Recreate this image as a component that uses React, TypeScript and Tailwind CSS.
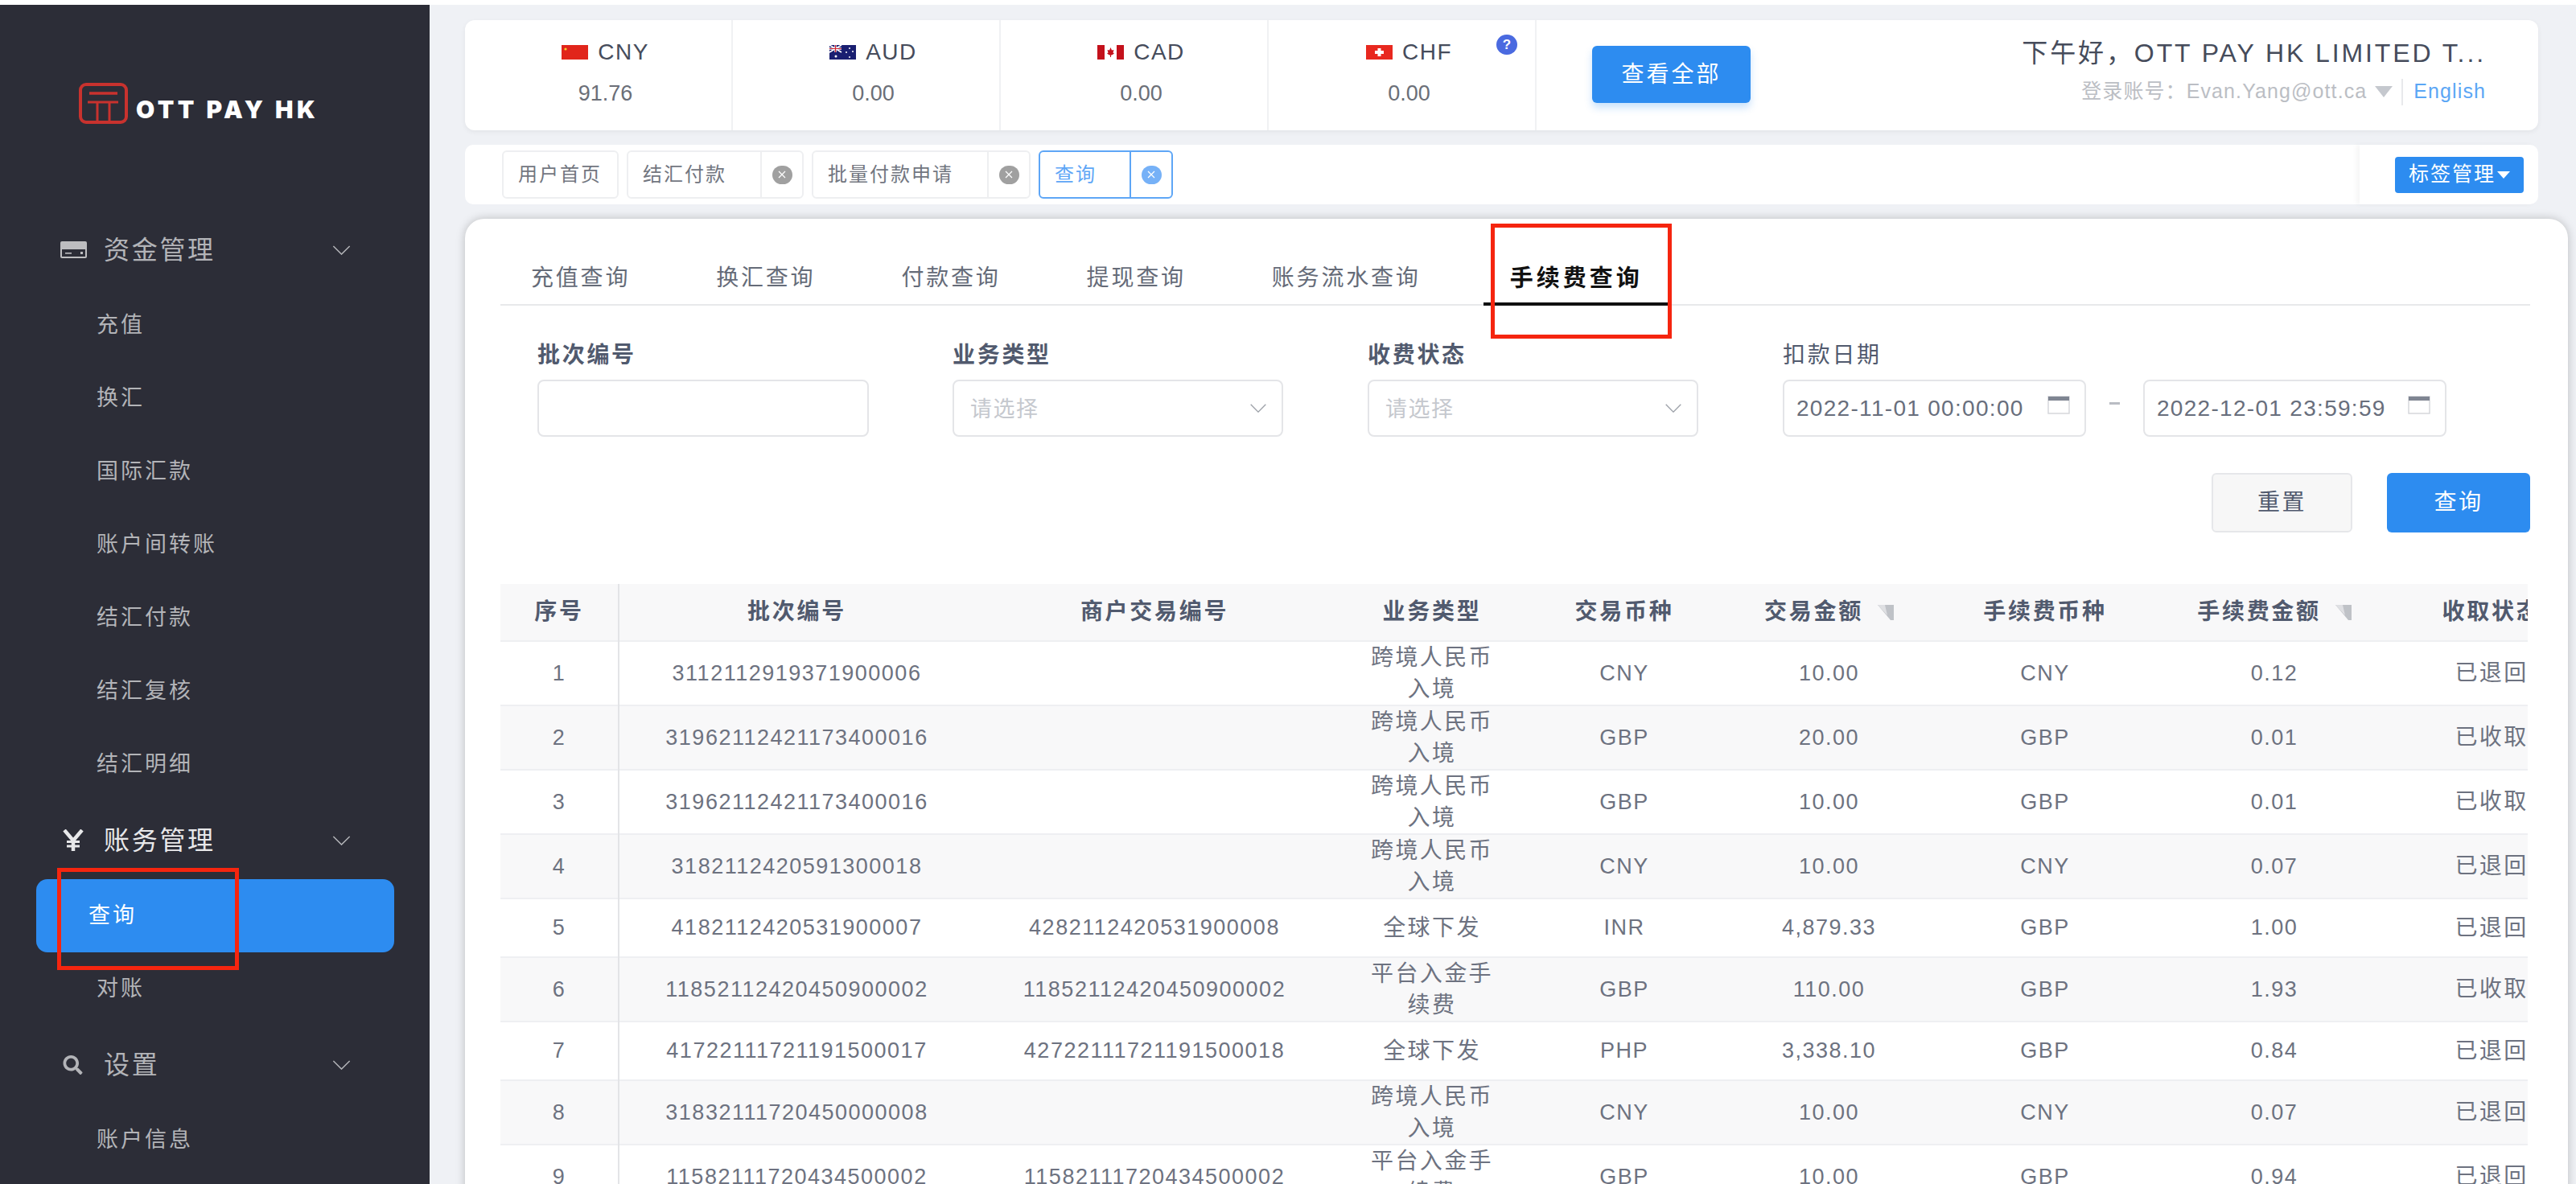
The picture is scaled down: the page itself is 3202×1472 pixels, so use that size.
import { FaSearch } from "react-icons/fa"

const rows = [
  { no: 1, batch: "3112112919371900006", order: "", type: "跨境人民币\n入境", cur: "CNY", amount: "10.00", feeCur: "CNY", fee: "0.12", status: "已退回" },
  { no: 2, batch: "31962112421173400016", order: "", type: "跨境人民币\n入境", cur: "GBP", amount: "20.00", feeCur: "GBP", fee: "0.01", status: "已收取" },
  { no: 3, batch: "31962112421173400016", order: "", type: "跨境人民币\n入境", cur: "GBP", amount: "10.00", feeCur: "GBP", fee: "0.01", status: "已收取" },
  { no: 4, batch: "3182112420591300018", order: "", type: "跨境人民币\n入境", cur: "CNY", amount: "10.00", feeCur: "CNY", fee: "0.07", status: "已退回" },
  { no: 5, batch: "4182112420531900007", order: "4282112420531900008", type: "全球下发", cur: "INR", amount: "4,879.33", feeCur: "GBP", fee: "1.00", status: "已退回" },
  { no: 6, batch: "11852112420450900002", order: "11852112420450900002", type: "平台入金手\n续费", cur: "GBP", amount: "110.00", feeCur: "GBP", fee: "1.93", status: "已收取" },
  { no: 7, batch: "41722111721191500017", order: "42722111721191500018", type: "全球下发", cur: "PHP", amount: "3,338.10", feeCur: "GBP", fee: "0.84", status: "已退回" },
  { no: 8, batch: "31832111720450000008", order: "", type: "跨境人民币\n入境", cur: "CNY", amount: "10.00", feeCur: "CNY", fee: "0.07", status: "已退回" },
  { no: 9, batch: "11582111720434500002", order: "11582111720434500002", type: "平台入金手\n续费", cur: "GBP", amount: "10.00", feeCur: "GBP", fee: "0.94", status: "已退回" },
]

function Chevron({ className }: { className: string }) {
  return (
    <svg viewBox="0 0 24 13" className={className} fill="none" stroke="currentColor" strokeWidth="1.6">
      <polyline points="1,1 12,12 23,1" />
    </svg>
  )
}

function Logo() {
  return (
    <svg viewBox="0 0 61 51" className="w-[61px] h-[51px] shrink-0" fill="none" stroke="#c8322e">
      <rect x="2" y="2" width="57" height="47" rx="7" strokeWidth="4" />
      <path d="M13 13H48" strokeWidth="3.5" />
      <path d="M11 24H49" strokeWidth="3" />
      <path d="M23 24V49M38 24V49" strokeWidth="3" />
    </svg>
  )
}

function CardIcon() {
  return (
    <svg viewBox="0 0 33 21" className="w-[33px] h-[21px]">
      <rect x="0" y="0" width="33" height="21" rx="2" fill="#bdbdc0" />
      <rect x="2" y="10" width="29" height="9" fill="#2c2d37" />
      <rect x="6" y="14" width="8" height="1.6" fill="#bdbdc0" />
      <rect x="25" y="13" width="3" height="3" fill="#bdbdc0" />
    </svg>
  )
}

function YenIcon() {
  return (
    <svg viewBox="0 0 26 27" className="w-[26px] h-[27px]" fill="none" stroke="currentColor" strokeWidth="4.5">
      <path d="M2 1L13 14L24 1" />
      <path d="M13 14V27" />
      <path d="M5 15.5H21M5 21H21" strokeWidth="3" />
    </svg>
  )
}

function ChinaFlag() {
  return (
    <svg viewBox="0 0 33 18" className="w-[33px] h-[18px]">
      <rect width="33" height="18" fill="#e1251b" />
      <circle cx="5" cy="5" r="1.6" fill="#f7d02c" />
    </svg>
  )
}

function AusFlag() {
  return (
    <svg viewBox="0 0 33 18" className="w-[33px] h-[18px]">
      <rect width="33" height="18" fill="#1a1f71" />
      <path d="M0 0L15 9M15 0L0 9" stroke="#ffffff" strokeWidth="1.6" />
      <path d="M7.5 0V9M0 4.5H15" stroke="#ffffff" strokeWidth="2.4" />
      <path d="M7.5 0V9M0 4.5H15" stroke="#d0222e" strokeWidth="1.2" />
      <circle cx="8" cy="14" r="1.5" fill="#ffffff" />
      <circle cx="25" cy="4" r="1" fill="#ffffff" />
      <circle cx="21" cy="9" r="1" fill="#ffffff" />
      <circle cx="29" cy="8" r="1" fill="#ffffff" />
      <circle cx="25" cy="15" r="1" fill="#ffffff" />
    </svg>
  )
}

function CanadaFlag() {
  return (
    <svg viewBox="0 0 33 18" className="w-[33px] h-[18px]">
      <rect width="33" height="18" fill="#ffffff" />
      <rect width="9" height="18" fill="#c4111b" />
      <rect x="24" width="9" height="18" fill="#c4111b" />
      <path d="M16.5 3L18 6.5L20.5 6L19.5 9.5L21 10.5L18 12.5L17 12.5V15H16V12.5L15 12.5L12 10.5L13.5 9.5L12.5 6L15 6.5Z" fill="#c4111b" />
    </svg>
  )
}

function SwissFlag() {
  return (
    <svg viewBox="0 0 33 18" className="w-[33px] h-[18px]">
      <rect width="33" height="18" fill="#e8281f" />
      <path d="M14.5 4H18.5V7H22V11H18.5V14H14.5V11H11V7H14.5Z" fill="#ffffff" />
    </svg>
  )
}

function Balance({ flag, code, value, last }: { flag: React.ReactNode; code: string; value: string; last?: boolean }) {
  return (
    <div className={`w-[333px] h-full pl-[18px] pt-[27px] flex flex-col items-center border-r-2 border-[#f0f1f3] ${last ? "relative" : ""}`}>
      <div className="h-[26px] flex items-center gap-[12px]">
        {flag}
        <span className="text-[28px] leading-[26px] tracking-[1.5px] text-[#464c5b]">{code}</span>
      </div>
      <span className="mt-[21px] text-[27px] leading-[34px] text-[#6b6f78]">{value}</span>
      {last && (
        <span className="absolute right-[22px] top-[18px] w-[26px] h-[25px] rounded-full bg-[#4a6ae0] flex items-center justify-center text-[17px] font-bold text-white">
          ?
        </span>
      )}
    </div>
  )
}

function CloseDot({ active }: { active?: boolean }) {
  return (
    <span className={`w-[25px] h-[23px] rounded-full flex items-center justify-center ${active ? "bg-[#76b1f7]" : "bg-[#a0a0a0]"}`}>
      <svg viewBox="0 0 10 10" className="w-[10px] h-[10px]" stroke="#ffffff" strokeWidth="1.2">
        <path d="M1 1L9 9M9 1L1 9" />
      </svg>
    </span>
  )
}

function TabChip({ label, width, closable, active }: { label: string; width: string; closable?: boolean; active?: boolean }) {
  return (
    <div className={`${width} h-[60px] flex rounded-[6px] border-2 ${active ? "border-[#5ea6f6]" : "border-[#eeeff1]"}`}>
      <div className={`flex-1 pl-[18px] flex items-center text-[24px] tracking-[2px] ${active ? "text-[#5ea6f6]" : "text-[#72767f]"}`}>
        {label}
      </div>
      {closable && (
        <div className={`w-[52px] flex items-center justify-center border-l-2 ${active ? "border-[#5ea6f6]" : "border-[#eeeff1]"}`}>
          <CloseDot active={active} />
        </div>
      )}
    </div>
  )
}

function SelectField({ label }: { label: string }) {
  return (
    <div className="w-[411px]">
      <div className="h-[40px] leading-[40px] mb-[10px] text-[28px] tracking-[2.7px] font-bold text-[#515a6e]">{label}</div>
      <div className="h-[71px] rounded-[8px] border-2 border-[#e4e5e8] pl-[20px] pr-[18px] flex items-center justify-between">
        <span className="text-[27px] tracking-[1.5px] text-[#c5c8ce] mt-[3px]">请选择</span>
        <Chevron className="w-[22px] h-[11px] text-[#9ea2a9]" />
      </div>
    </div>
  )
}

function CalendarIcon() {
  return (
    <svg viewBox="0 0 28 23" className="w-[28px] h-[23px] -mt-[8px]">
      <rect x="1" y="1" width="26" height="21" fill="none" stroke="#d3d5d9" strokeWidth="1.4" />
      <rect x="1" y="1" width="26" height="5" fill="#7f8592" />
    </svg>
  )
}

function DateField({ value }: { value: string }) {
  return (
    <div className="w-[377px] h-[71px] rounded-[8px] border-2 border-[#e4e5e8] pl-[15px] pr-[18px] flex items-center justify-between">
      <span className="text-[28px] tracking-[1.3px] text-[#686e7c] whitespace-nowrap">{value}</span>
      <CalendarIcon />
    </div>
  )
}

function FilterMark() {
  return (
    <svg viewBox="0 0 20 19" className="w-[20px] h-[19px] shrink-0">
      <polygon points="0,0 20,0 20,19 16,19" fill="#bfc2c7" />
      <polygon points="0,0 9,0 12,13" fill="#dfe0e3" />
    </svg>
  )
}

function HeadCell({ width, children }: { width: string; children: React.ReactNode }) {
  return (
    <th className={`${width} h-[71px] p-0 text-[28px] tracking-[2.7px] font-bold text-[#515a6e] whitespace-nowrap`}>
      {children}
    </th>
  )
}

const cell = "p-0 text-center text-[27px] tracking-[1.5px] text-[#6d7280] whitespace-nowrap"

export default function App() {
  const subText = "text-[27px] tracking-[3px]"

  return (
    <div className="relative w-[3202px] h-[1472px] overflow-hidden bg-white pt-[6px] flex [font-family:'Liberation_Sans','Noto_Sans_CJK_SC',sans-serif]">
      {/* 左側選單 */}
      <aside className="w-[534px] shrink-0 bg-[#2c2d37] text-[#b3b4b8]">
        <div className="h-[259px] pt-[97px] pl-[98px] flex items-start gap-[10px]">
          <Logo />
          <span className="mt-[15px] text-[30px] leading-[36px] font-black tracking-[4.5px] text-white [font-family:Inter,sans-serif] whitespace-nowrap">
            OTT PAY HK
          </span>
        </div>

        <div className="h-[91px] flex items-center pl-[75px] pr-[98px]">
          <span className="w-[54px]"><CardIcon /></span>
          <span className="flex-1 text-[32px] tracking-[2.7px]">资金管理</span>
          <Chevron className="w-[23px] h-[12px]" />
        </div>
        <div className="mt-[3px]">
          {["充值", "换汇", "国际汇款", "账户间转账", "结汇付款", "结汇复核", "结汇明细"].map((name) => (
            <div key={name} className={`h-[91px] flex items-center pl-[120px] ${subText}`}>{name}</div>
          ))}
        </div>

        <div className="mt-[3px] h-[91px] flex items-center pl-[78px] pr-[98px] text-[#e8e8ea]">
          <span className="w-[51px]"><YenIcon /></span>
          <span className="flex-1 text-[32px] tracking-[2.7px]">账务管理</span>
          <Chevron className="w-[23px] h-[12px] text-[#b3b4b8]" />
        </div>
        <div className={`mt-[3px] ml-[45px] w-[445px] h-[91px] rounded-[14px] bg-[#2d8cf0] flex items-center pl-[65px] text-white ${subText}`}>查询</div>
        <div className={`h-[91px] flex items-center pl-[120px] ${subText}`}>对账</div>

        <div className="mt-[3px] h-[91px] flex items-center pl-[78px] pr-[98px]">
          <span className="w-[51px]"><FaSearch className="w-[25px] h-[24px]" /></span>
          <span className="flex-1 text-[32px] tracking-[2.7px]">设置</span>
          <Chevron className="w-[23px] h-[12px]" />
        </div>
        <div className={`mt-[3px] h-[91px] flex items-center pl-[120px] ${subText}`}>账户信息</div>
      </aside>

      <main className="flex-1 min-w-0 bg-[#eff1f5] pl-[44px] pt-[19px]">
        {/* 幣種餘額 */}
        <div className="w-[2577px] h-[137px] rounded-[12px] bg-white shadow-[0_2px_6px_rgba(0,0,0,0.06)] flex items-stretch">
          <Balance flag={<ChinaFlag />} code="CNY" value="91.76" />
          <Balance flag={<AusFlag />} code="AUD" value="0.00" />
          <Balance flag={<CanadaFlag />} code="CAD" value="0.00" />
          <Balance flag={<SwissFlag />} code="CHF" value="0.00" last />
          <div className="ml-[69px] mt-[32px] w-[197px] h-[71px] rounded-[6px] bg-[#2d8cf0] shadow-[0_6px_10px_rgba(45,140,240,0.25)] flex items-center justify-center text-[28px] tracking-[3px] text-white">
            查看全部
          </div>
          <div className="flex-1 pr-[65px] flex flex-col items-end">
            <div className="mt-[23px] h-[36px] leading-[36px] text-[32px] tracking-[2.9px] text-[#464c5b] whitespace-nowrap">下午好，OTT PAY HK LIMITED T...</div>
            <div className="mt-[12px] h-[36px] flex items-center text-[25px] tracking-[1.1px] text-[#bbbec4] whitespace-nowrap">
              <span>登录账号：Evan.Yang@ott.ca</span>
              <span className="ml-[10px] w-0 h-0 border-x-[11px] border-x-transparent border-t-[14px] border-t-[#c5c8ce]" />
              <span className="ml-[11px] mr-[13px] w-[2px] h-[33px] bg-[#e8e9ec]" />
              <span className="text-[#5ba6f5]">English</span>
            </div>
          </div>
        </div>

        {/* 已開啟的分頁 */}
        <div className="mt-[18px] w-[2577px] h-[74px] flex items-stretch">
          <div className="flex-1 rounded-l-[10px] bg-white pl-[46px] flex items-center gap-[10px]">
            <TabChip label="用户首页" width="w-[145px]" />
            <TabChip label="结汇付款" width="w-[220px]" closable />
            <TabChip label="批量付款申请" width="w-[272px]" closable />
            <TabChip label="查询" width="w-[167px]" closable active />
          </div>
          <div className="w-[222px] rounded-r-[10px] bg-white pl-[44px] flex items-center shadow-[-4px_0_6px_rgba(0,0,0,0.04)]">
            <div className="w-[160px] h-[45px] rounded-[4px] bg-[#2d8cf0] pl-[17px] flex items-center gap-[2px] text-[25px] tracking-[2px] text-white whitespace-nowrap">
              标签管理
              <span className="w-0 h-0 border-x-[8px] border-x-transparent border-t-[9px] border-t-white" />
            </div>
          </div>
        </div>

        {/* 查詢主體 */}
        <div className="mt-[18px] w-[2614px] h-[1300px] rounded-[24px] bg-white shadow-[0_0_12px_rgba(0,0,0,0.22)] pl-[44px] pr-[47px] pt-[52px]">
          <div className="flex gap-[41px] pl-[5px] border-b-2 border-[#e8e9eb] h-[56px]">
            {["充值查询", "换汇查询", "付款查询", "提现查询", "账务流水查询"].map((t) => (
              <div key={t} className="px-[33px] h-[44px] leading-[44px] text-[28px] tracking-[2.8px] text-[#656b78] whitespace-nowrap">{t}</div>
            ))}
            <div className="ml-[4px] px-[33px] h-[56px] leading-[44px] text-[29px] tracking-[4px] font-bold text-[#111111] whitespace-nowrap border-b-4 border-[#111111]">手续费查询</div>
          </div>

          <div className="mt-[42px] pl-[46px] flex items-start">
            <div className="w-[412px]">
              <div className="h-[40px] leading-[40px] mb-[10px] text-[28px] tracking-[2.7px] font-bold text-[#515a6e]">批次编号</div>
              <div className="h-[71px] rounded-[8px] border-2 border-[#e4e5e8]" />
            </div>
            <div className="ml-[104px]"><SelectField label="业务类型" /></div>
            <div className="ml-[105px]"><SelectField label="收费状态" /></div>
            <div className="ml-[105px]">
              <div className="h-[40px] leading-[40px] mb-[10px] text-[28px] tracking-[2.7px] text-[#515a6e]">扣款日期</div>
              <div className="flex items-center">
                <DateField value="2022-11-01 00:00:00" />
                <span className="w-[71px] flex justify-center"><span className="w-[13px] h-[3px] bg-[#b9bcc3] -mt-[8px]" /></span>
                <DateField value="2022-12-01 23:59:59" />
              </div>
            </div>
          </div>

          <div className="mt-[45px] flex justify-end gap-[43px]">
            <button className="w-[175px] h-[74px] rounded-[6px] border-2 border-[#e6e7ea] bg-[#f7f7f7] text-[28px] tracking-[2.5px] text-[#515a6e]">重置</button>
            <button className="w-[178px] h-[74px] rounded-[6px] bg-[#2d8cf0] text-[28px] tracking-[2.5px] text-white">查询</button>
          </div>

          <div className="mt-[64px] w-[2520px] overflow-hidden">
            <table className="w-[2592px] table-fixed">
              <thead>
                <tr className="bg-[#f8f8f9]">
                  <HeadCell width="w-[147px] border-r-2 border-[#e3e4e7]">序号</HeadCell>
                  <HeadCell width="w-[442px]">批次编号</HeadCell>
                  <HeadCell width="w-[448px]">商户交易编号</HeadCell>
                  <HeadCell width="w-[242px]">业务类型</HeadCell>
                  <HeadCell width="w-[236px]">交易币种</HeadCell>
                  <HeadCell width="w-[273px]">
                    <span className="inline-flex items-center gap-[18px]">交易金额<FilterMark /></span>
                  </HeadCell>
                  <HeadCell width="w-[264px]">手续费币种</HeadCell>
                  <HeadCell width="w-[306px]">
                    <span className="inline-flex items-center gap-[18px]">手续费金额<FilterMark /></span>
                  </HeadCell>
                  <HeadCell width="w-[234px]">收取状态</HeadCell>
                </tr>
              </thead>
              <tbody>
                {rows.map((r) => (
                  <tr key={r.no} className={`border-t-2 border-[#eeeff2] ${r.no % 2 === 0 ? "bg-[#f8f8f9]" : "bg-white"}`}>
                    <td className={`${cell} border-r-2 border-[#e3e4e7] ${r.type.includes("\n") ? "h-[78px]" : "h-[73px]"}`}>{r.no}</td>
                    <td className={cell}>{r.batch}</td>
                    <td className={cell}>{r.order}</td>
                    <td className="p-0 text-center text-[28px] leading-[39px] tracking-[2.4px] text-[#6d7280] whitespace-pre-line">{r.type}</td>
                    <td className={cell}>{r.cur}</td>
                    <td className={cell}>{r.amount}</td>
                    <td className={cell}>{r.feeCur}</td>
                    <td className={cell}>{r.fee}</td>
                    <td className={`${cell} text-[28px] tracking-[2.4px]`}>{r.status}</td>
                  </tr>
                ))}
              </tbody>
            </table>
          </div>
        </div>
      </main>

      {/* 截圖上的紅色標註框 */}
      <div className="absolute left-[71px] top-[1079px] w-[226px] h-[127px] border-[5px] border-[#f5250f]" />
      <div className="absolute left-[1853px] top-[278px] w-[225px] h-[143px] border-[5px] border-[#f5250f]" />
    </div>
  )
}
